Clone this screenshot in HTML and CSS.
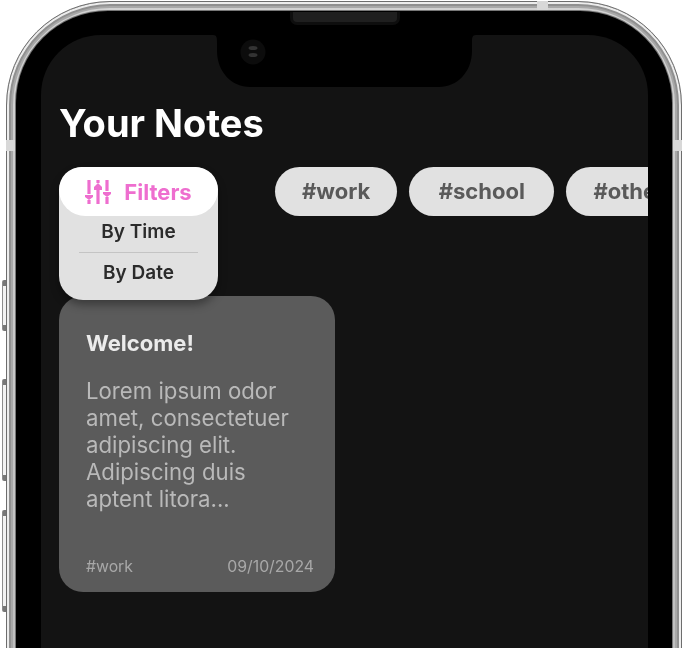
FILE: index.html
```html
<!DOCTYPE html>
<html lang="en">
<head>
<meta charset="utf-8">
<title>Your Notes</title>
<link rel="stylesheet" href="styles.css">
</head>
<body>
<div class="stage">
  <span class="side-btn btn-a"></span>
  <span class="side-btn btn-b"></span>
  <span class="side-btn btn-c"></span>
  <div class="phone">
    <span class="band band-top"></span>
    <span class="band band-left"></span>
    <span class="band band-right"></span>
    <div class="bezel">
      <main class="screen">
        <h1 class="title">Your Notes</h1>
        <div class="chips">
          <div class="filters">
            <button class="filter-head">
              <svg class="filter-icon" viewBox="0 0 27 25" aria-hidden="true">
                <path d="M5 1v14M5 21v4M14 1v3M14 11v14M23 1v11M23 18v7"/>
                <path class="solid" d="M1 16h8v2l-4 3-4-3zM10 8l4-4 4 4v3h-8zM19 13h8v2l-4 3-4-3z"/>
              </svg>
              <span>Filters</span>
            </button>
            <div class="filter-menu">
              <div class="filter-item">By Time</div>
              <div class="filter-rule"></div>
              <div class="filter-item">By Date</div>
            </div>
          </div>
          <span class="chip">#work</span>
          <span class="chip chip-school">#school</span>
          <span class="chip chip-other">#other</span>
        </div>
        <article class="note">
          <h2 class="note-title">Welcome!</h2>
          <p class="note-body">Lorem ipsum odor amet, consectetuer adipiscing elit. Adipiscing duis aptent litora...</p>
          <footer class="note-foot"><span>#work</span><span>09/10/2024</span></footer>
        </article>
      </main>
      <div class="notch">
        <svg class="notch-shape" viewBox="0 0 263 53" aria-hidden="true">
          <path d="M0 0H263C259 0 259 3 259 8V16C259 37 244 52 226 52H37C19 52 4 37 4 16V8C4 3 4 0 0 0Z"/>
        </svg>
        <svg class="camera" viewBox="0 0 26 26" aria-hidden="true">
          <circle class="cam-ring" cx="13" cy="13" r="12.5"/>
          <ellipse class="cam-glint" cx="13" cy="9" rx="4.5" ry="2"/>
          <ellipse class="cam-glint" cx="13" cy="16" rx="4.5" ry="2"/>
        </svg>
      </div>
      <span class="speaker"></span>
    </div>
  </div>
</div>
</body>
</html>
```
FILE: styles.css
```css
* { box-sizing: border-box; }
html, body { margin: 0; height: 100%; background: #fff; overflow: hidden; }
body { font-family: Inter, "Liberation Sans", sans-serif; }

.stage { position: relative; width: 684px; height: 648px; overflow: hidden; }

.side-btn {
  position: absolute;
  left: 2px;
  width: 5px;
  background: linear-gradient(180deg, #777 0 6px, #f2f2f2 6px calc(100% - 6px), #777 calc(100% - 6px));
  border-left: 1px solid #8c8c8c;
  border-radius: 2px 0 0 2px;
}
.btn-a { top: 280px; height: 51px; }
.btn-b { top: 379px; height: 102px; }
.btn-c { top: 510px; height: 102px; }

.phone {
  position: relative;
  margin: 1px 2px 0 6px;
  height: 760px;
  padding: 9px 9px 0;
  border-radius: 104px;
  background: linear-gradient(180deg, #d2d2d2, #bcbcbc);
  border: 1px solid #6d6d6d;
  box-shadow: inset 0 0 0 2px #ededed, inset 0 0 0 4px #909090, inset 0 0 0 6px #a8a8a8;
  filter: blur(0.35px);
}
.band { position: absolute; background: #d8d8d8; }
.band-top { top: -1px; left: 530px; width: 11px; height: 11px; }
.band-left { top: 138px; left: -1px; width: 11px; height: 11px; }
.band-right { top: 138px; right: -1px; width: 11px; height: 11px; }

.bezel {
  position: relative;
  height: 100%;
  padding: 24px 24px 0 25px;
  background: #000;
  border-radius: 92px;
  box-shadow: 0 0 0 1px #777;
}
.screen {
  height: 720px;
  padding: 66px 0 0 18px;
  background: #131313;
  border-radius: 60px;
  overflow: hidden;
  filter: blur(0.35px);
}

.title {
  margin: 0;
  color: #fff;
  font-size: 38px;
  line-height: 44px;
  font-weight: 700;
}

.chips {
  display: flex;
  align-items: flex-start;
  gap: 12px;
  margin-top: 22px;
  height: 49px;
}
.filters { position: relative; flex: none; width: 159px; margin-right: 45px; z-index: 2; }
.filter-head {
  position: relative;
  z-index: 1;
  display: flex;
  align-items: center;
  justify-content: center;
  gap: 13px;
  width: 100%;
  height: 49px;
  padding: 0;
  border: 0;
  border-radius: 24px 24px 28px 28px;
  background: #fff;
  color: #ee6ecf;
  font: 700 22px Inter, "Liberation Sans", sans-serif;
}
.filter-icon { width: 27px; height: 25px; margin-left: -1px; }
.filter-icon path { fill: none; stroke: #ee6ecf; stroke-width: 3.2; }
.filter-icon .solid { fill: #ee6ecf; stroke: none; }
.filter-menu {
  position: absolute;
  top: 0;
  left: 0;
  width: 100%;
  height: 133px;
  padding-top: 51px;
  background: #e1e1e1;
  border-radius: 24px;
  box-shadow: 0 5px 8px rgba(0, 0, 0, .35);
}
.filter-item {
  height: 34px;
  color: #2b2b2b;
  font-size: 19px;
  font-weight: 600;
  line-height: 28px;
  text-align: center;
}
.filter-item:last-child { height: auto; line-height: 40px; }
.filter-rule { height: 1px; margin: 0 20px; background: #c4c4c4; }

.chip {
  flex: none;
  height: 49px;
  padding: 0 27px;
  border-radius: 25px;
  background: #e1e1e1;
  color: #5a5a5a;
  font-size: 22px;
  font-weight: 700;
  line-height: 49px;
}
.chip-school { padding: 0 29.5px; }
.chip-other { margin-right: -40px; }

.note {
  display: flex;
  flex-direction: column;
  width: 276px;
  height: 296px;
  margin-top: 80px;
  padding: 32px 21px 15px 27px;
  border-radius: 24px;
  background: #5b5b5b;
  color: #b9b9b9;
}
.note-title { margin: 0; color: #ebebeb; font-size: 22px; line-height: 30px; font-weight: 700; }
.note-body { width: 215px; margin: 19px 0 0; font-size: 22.2px; line-height: 27px; }
.note-foot {
  display: flex;
  justify-content: space-between;
  margin-top: auto;
  font-size: 15.8px;
  line-height: 20px;
  color: #a8a8a8;
}

.notch { position: absolute; top: 24px; left: 197px; width: 263px; height: 53px; }
.notch-shape { display: block; width: 100%; height: 100%; }
.notch-shape path { fill: #000; }
.camera { position: absolute; top: 4px; left: 27px; width: 26px; height: 26px; }
.cam-ring { fill: #0c0c0c; }
.cam-glint { fill: #333; }
.speaker {
  position: absolute;
  top: 1px;
  left: 274px;
  width: 110px;
  height: 13px;
  border-radius: 0 0 7px 7px;
  background: #1f1f1f;
  border: 3px solid #0e0e0e;
  border-top: 0;
}
```
